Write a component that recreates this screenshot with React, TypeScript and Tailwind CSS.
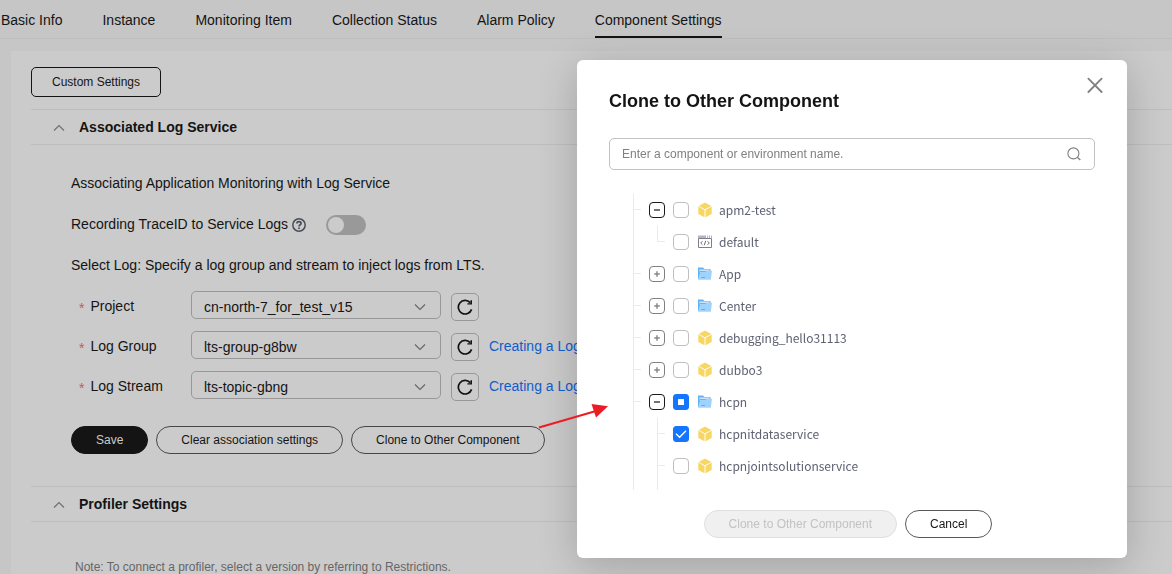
import { useEffect, useRef, useState } from "react";
import type { ReactNode } from "react";

const tabs = [
  "Basic Info",
  "Instance",
  "Monitoring Item",
  "Collection Status",
  "Alarm Policy",
  "Component Settings",
];

function ChevronUp() {
  return (
    <svg className="h-3 w-3" viewBox="0 0 12 12" fill="none" stroke="#6e6e6e" strokeWidth="1.1" aria-hidden="true">
      <path d="M1 9.500 6 4.500 11 9.500" />
    </svg>
  );
}

function ChevronDown() {
  return (
    <svg
      className="pointer-events-none absolute top-2.5 right-[15px] h-3 w-3"
      viewBox="0 0 12 12"
      fill="none"
      stroke="#666"
      strokeWidth="1.1"
      aria-hidden="true"
    >
      <path d="M1 3.500 6 8.500 11 3.500" />
    </svg>
  );
}

function RefreshIcon() {
  return (
    <svg className="h-4 w-4" viewBox="0 0 16 16" fill="none" aria-hidden="true">
      <path d="M14.600 10.400A6.800 6.800 0 1 1 13.200 3.600" stroke="#141414" strokeWidth="1.700" />
      <path d="M15 1.300V5.600H10.400V4.300H13.400V1.300Z" fill="#141414" />
    </svg>
  );
}

function HelpIcon() {
  return (
    <svg className="h-3.5 w-3.5" viewBox="0 0 14 14" fill="none" stroke="#494d5a" strokeWidth="1.5" aria-hidden="true">
      <circle cx="7" cy="7" r="6.2" />
      <path d="M4.900 5.600C4.900 4.300 5.800 3.600 7 3.600s2.100.7 2.100 1.800C9.100 6.800 7 6.700 7 8.500" strokeWidth="1.700" />
      <path d="M7 9.400V11" strokeWidth="1.800" />
    </svg>
  );
}

function CubeIcon() {
  return (
    <svg className="h-4 w-3.5" viewBox="0 0 14 16" aria-hidden="true">
      <path d="M7 .6 13.300 3.900 7 7.200 .7 3.900Z" fill="#f8d664" />
      <path d="M.3 4.600 6.500 7.900V15.300L.3 12Z" fill="#f8d664" />
      <path d="M13.700 4.600 7.500 7.900V15.300L13.700 12Z" fill="#f8d664" />
    </svg>
  );
}

function FolderIcon() {
  return (
    <svg className="h-4 w-3.5" viewBox="0 0 14 16" aria-hidden="true">
      <path d="M0 1.500H5L6.500 3H12.500V6H2.500L.5 13.500H0Z" fill="#64b3f4" />
      <path d="M1.500 3.500H11.500V5H2L1.500 7Z" fill="#c9e6ff" />
      <path d="M2.500 6H7L8.500 4.700H14L12.800 13.700H.2Z" fill="#9ed3ff" />
      <path d="M3.500 11.500H7" stroke="#5aa9ea" strokeWidth=".9" />
    </svg>
  );
}

function CodeIcon() {
  return (
    <svg className="h-4 w-3.5" viewBox="0 0 14 16" fill="none" aria-hidden="true">
      <path d="M0 1.500H8V4.500H0Z" fill="#b4b5bb" />
      <path d="M9.500 1.500V4M11.500 1.500V4M13.500 1.500V4" stroke="#b4b5bb" />
      <path d="M.5 4.500H13.500V13.500H.5Z" stroke="#7c7f89" />
      <path d="M4.500 7.200 2.700 9 4.500 10.800M9.500 7.200 11.300 9 9.500 10.800M7.700 6.800 6.300 11.200" stroke="#575b69" strokeWidth=".9" />
    </svg>
  );
}

function SectionHeader({ title }: { title: string }) {
  return (
    <h2 className="border-y border-[#bebebe]">
      <button type="button" aria-expanded="true" className="flex h-[34px] w-full items-center gap-3.5 pl-[22px] text-sm font-bold">
        <ChevronUp />
        {title}
      </button>
    </h2>
  );
}

function FieldRow({ id, label, value, link }: { id: string; label: string; value: string; link?: string }) {
  return (
    <div className="flex h-10 items-start">
      <label htmlFor={id} className="flex w-[120px] gap-1.5 pt-[5px] pl-2 leading-5">
        <span className="pt-0.5 text-[#d8504f]">*</span>
        {label}
      </label>
      <div className="relative w-[250px]">
        <select
          id={id}
          defaultValue={value}
          className="block h-7 w-full appearance-none rounded-[5px] border border-[#989898] bg-transparent pt-1 pl-3"
        >
          <option>{value}</option>
        </select>
        <ChevronDown />
      </div>
      <button
        type="button"
        aria-label={"Refresh " + label}
        className="mt-0.5 ml-2.5 flex h-7 w-7 items-center justify-center rounded-[5px] border border-[#989898]"
      >
        <RefreshIcon />
      </button>
      {link && (
        <a href="#" className="ml-2.5 pt-[5px] leading-5 text-[#105dcc]">
          {link}
        </a>
      )}
    </div>
  );
}

type Mark = "off" | "on" | "some";
type Kind = "cube" | "folder" | "code";

function TreeCheckbox({ id, mark }: { id: string; mark: Mark }) {
  const ref = useRef<HTMLInputElement>(null);
  const [state, setState] = useState<Mark>(mark);
  useEffect(() => {
    if (ref.current) ref.current.indeterminate = state === "some";
  }, [state]);
  return (
    <span className="relative ml-2 h-4 w-4">
      <input
        ref={ref}
        id={id}
        type="checkbox"
        checked={state === "on"}
        onChange={(e) => setState(e.target.checked ? "on" : "off")}
        className="block h-4 w-4 appearance-none rounded-[4px] border border-[#bfbfbf] bg-white checked:rounded-[3px] checked:border-[#1476ff] checked:bg-[#1476ff] indeterminate:rounded-[3px] indeterminate:border-[#1476ff] indeterminate:bg-[#1476ff]"
      />
      {state !== "off" && (
        <svg className="pointer-events-none absolute inset-0 h-4 w-4" viewBox="0 0 16 16" fill="none" aria-hidden="true">
          {state === "on" ? (
            <path d="M3 7.700 6.600 11.200 13 4.700" stroke="#fff" strokeWidth="1.400" />
          ) : (
            <rect x="5" y="5" width="6" height="6" rx=".6" fill="#fff" />
          )}
        </svg>
      )}
    </span>
  );
}

function TreeItem({
  name,
  kind,
  mark = "off",
  expanded,
  only,
  children,
}: {
  name: string;
  kind: Kind;
  mark?: Mark;
  expanded?: boolean;
  only?: boolean;
  children?: ReactNode;
}) {
  return (
    <li>
      <div className="flex h-8 items-center">
        <span
          className={
            only
              ? "-ml-px h-4 w-2 self-start border-b border-l border-[#ebebeb]"
              : "h-4 w-[7px] self-start border-b border-[#ebebeb]"
          }
        />
        {expanded !== undefined && (
          <button
            type="button"
            aria-label={(expanded ? "Collapse " : "Expand ") + name}
            className={
              expanded
                ? "ml-2 flex h-4 w-4 items-center justify-center rounded-[4px] border border-[#191919]"
                : "ml-2 flex h-4 w-4 items-center justify-center rounded-[4px] border border-[#808080]"
            }
          >
            <svg
              className={expanded ? "h-3.5 w-3.5 text-[#444]" : "h-3.5 w-3.5 text-[#8a8a8a]"}
              viewBox="0 0 14 14"
              stroke="currentColor"
              strokeWidth="1.500"
              aria-hidden="true"
            >
              <path d={expanded ? "M4 7H10" : "M4.200 7H9.800M7 4.200V9.800"} />
            </svg>
          </button>
        )}
        <TreeCheckbox id={"node-" + name} mark={mark} />
        <label htmlFor={"node-" + name} className="flex items-center gap-[7px] pl-[9px]">
          {kind === "cube" && <CubeIcon />}
          {kind === "folder" && <FolderIcon />}
          {kind === "code" && <CodeIcon />}
          {name}
        </label>
      </div>
      {children}
    </li>
  );
}

function CloneDialog() {
  return (
    <div className="fixed inset-0 flex items-start justify-end pt-[60px] pr-[45px]">
      <div
        role="dialog"
        aria-modal="true"
        aria-labelledby="dialog-title"
        className="w-[550px] rounded-md bg-white px-8 pb-5 shadow-[0_8px_40px_rgba(0,0,0,0.2)]"
      >
        <div className="flex justify-between pt-[17px]">
          <h1 id="dialog-title" className="pt-3 text-lg leading-6 font-bold">
            Clone to Other Component
          </h1>
          <button type="button" aria-label="Close" className="-mr-2 h-4 w-4">
            <svg className="h-4 w-4" viewBox="0 0 16 16" stroke="#808080" strokeWidth="1.800" strokeLinecap="round" aria-hidden="true">
              <path d="M1.400 1.700 14.600 15M14.600 1.700 1.400 15" />
            </svg>
          </button>
        </div>
        <div className="mt-[25px] flex h-8 items-center rounded-[5px] border border-[#c2c2c2] px-3">
          <input
            type="text"
            aria-label="Component or environment name"
            placeholder="Enter a component or environment name."
            className="min-w-0 flex-1 text-xs outline-none placeholder:text-[#808080]"
          />
          <svg className="h-4 w-4" viewBox="0 0 16 16" fill="none" stroke="#808080" strokeWidth="1.100" aria-hidden="true">
            <circle cx="7.400" cy="7.400" r="5.500" />
            <path d="M11.300 11.200 14.300 14" strokeWidth="1.300" />
          </svg>
        </div>
        <div className="mt-6 ml-6 h-[296px] overflow-hidden">
          <ul className="h-full border-l border-[#ebebeb] font-['Noto_Sans_CJK_SC',sans-serif] text-xs text-[#5e6172]">
            <TreeItem name="apm2-test" kind="cube" expanded={true}>
              <ul className="ml-6">
                <TreeItem name="default" kind="code" only />
              </ul>
            </TreeItem>
            <TreeItem name="App" kind="folder" expanded={false} />
            <TreeItem name="Center" kind="folder" expanded={false} />
            <TreeItem name="debugging_hello31113" kind="cube" expanded={false} />
            <TreeItem name="dubbo3" kind="cube" expanded={false} />
            <TreeItem name="hcpn" kind="folder" mark="some" expanded={true}>
              <ul className="ml-[23px] border-l border-[#ebebeb] pb-2">
                <TreeItem name="hcpnitdataservice" kind="cube" mark="on" />
                <TreeItem name="hcpnjointsolutionservice" kind="cube" />
              </ul>
            </TreeItem>
          </ul>
        </div>
        <div className="mt-5 flex justify-center gap-2 pr-2 text-xs">
          <button type="button" disabled className="h-7 rounded-full border border-[#dfdfdf] bg-[#f0f0f0] px-6 text-[#c2c2c2]">
            Clone to Other Component
          </button>
          <button type="button" className="h-7 rounded-full border border-[#595959] px-6 text-[#191919]">
            Cancel
          </button>
        </div>
      </div>
    </div>
  );
}

function PointerArrow() {
  return (
    <svg className="pointer-events-none fixed top-[400px] left-[536px] h-8 w-20" viewBox="0 0 80 32" aria-hidden="true">
      <path d="M3 27.500 60 11" stroke="#ed1c24" strokeWidth="2" />
      <path d="M55.500 4 72 6.300 60 17.500Z" fill="#ed1c24" />
    </svg>
  );
}

export default function App() {
  return (
    <div className="flex min-h-screen flex-col bg-[#c6c6c6] font-['Liberation_Sans',Arial,sans-serif] text-sm text-[#141414]">
      <nav className="flex h-[39px] gap-10 border-b border-[#bebebe] pl-px">
        {tabs.map((tab) => (
          <a
            key={tab}
            href="#"
            className={
              tab === "Component Settings"
                ? "h-[38px] border-b-2 border-[#141414] pt-2.5 leading-5 whitespace-nowrap"
                : "h-[38px] pt-2.5 leading-5 whitespace-nowrap"
            }
          >
            {tab}
          </a>
        ))}
      </nav>
      <main className="mt-3 ml-[11px] flex-1 bg-[#cbcbcb] pt-4 pl-5">
        <button type="button" className="h-[30px] rounded-[5px] border border-[#141414] px-5 text-xs">
          Custom Settings
        </button>
        <section className="mt-3">
          <SectionHeader title="Associated Log Service" />
          <div className="px-10 pt-7">
            <p className="leading-5">Associating Application Monitoring with Log Service</p>
            <div className="mt-5 flex h-6 items-center">
              <label htmlFor="trace-id" className="pb-0.5">
                Recording TraceID to Service Logs
              </label>
              <button type="button" aria-label="Help" className="ml-1">
                <HelpIcon />
              </button>
              <input
                id="trace-id"
                type="checkbox"
                role="switch"
                className="ml-5 h-5 w-10 appearance-none rounded-full bg-[#999] p-0.5 before:block before:h-4 before:w-4 before:rounded-full before:bg-[#cbcbcb] checked:bg-[#105dcc] checked:before:ml-5"
              />
            </div>
            <p className="mt-[18px] leading-5">Select Log: Specify a log group and stream to inject logs from LTS.</p>
            <form className="mt-4" onSubmit={(e) => e.preventDefault()}>
              <FieldRow id="project" label="Project" value="cn-north-7_for_test_v15" />
              <FieldRow id="log-group" label="Log Group" value="lts-group-g8bw" link="Creating a Log Group" />
              <FieldRow id="log-stream" label="Log Stream" value="lts-topic-gbng" link="Creating a Log Stream" />
              <div className="mt-[15px] flex gap-2 text-xs">
                <button type="submit" className="h-7 rounded-full border border-[#141414] bg-[#141414] px-6 text-[#cbcbcb]">
                  Save
                </button>
                <button type="button" className="h-7 rounded-full border border-[#474747] px-6">
                  Clear association settings
                </button>
                <button type="button" className="h-7 rounded-full border border-[#474747] px-6">
                  Clone to Other Component
                </button>
              </div>
            </form>
          </div>
        </section>
        <section className="mt-8">
          <SectionHeader title="Profiler Settings" />
          <p className="pt-[38px] pl-11 text-xs leading-[14px] text-[#666]">
            Note: To connect a profiler, select a version by referring to Restrictions.
          </p>
        </section>
      </main>
      <CloneDialog />
      <PointerArrow />
    </div>
  );
}
